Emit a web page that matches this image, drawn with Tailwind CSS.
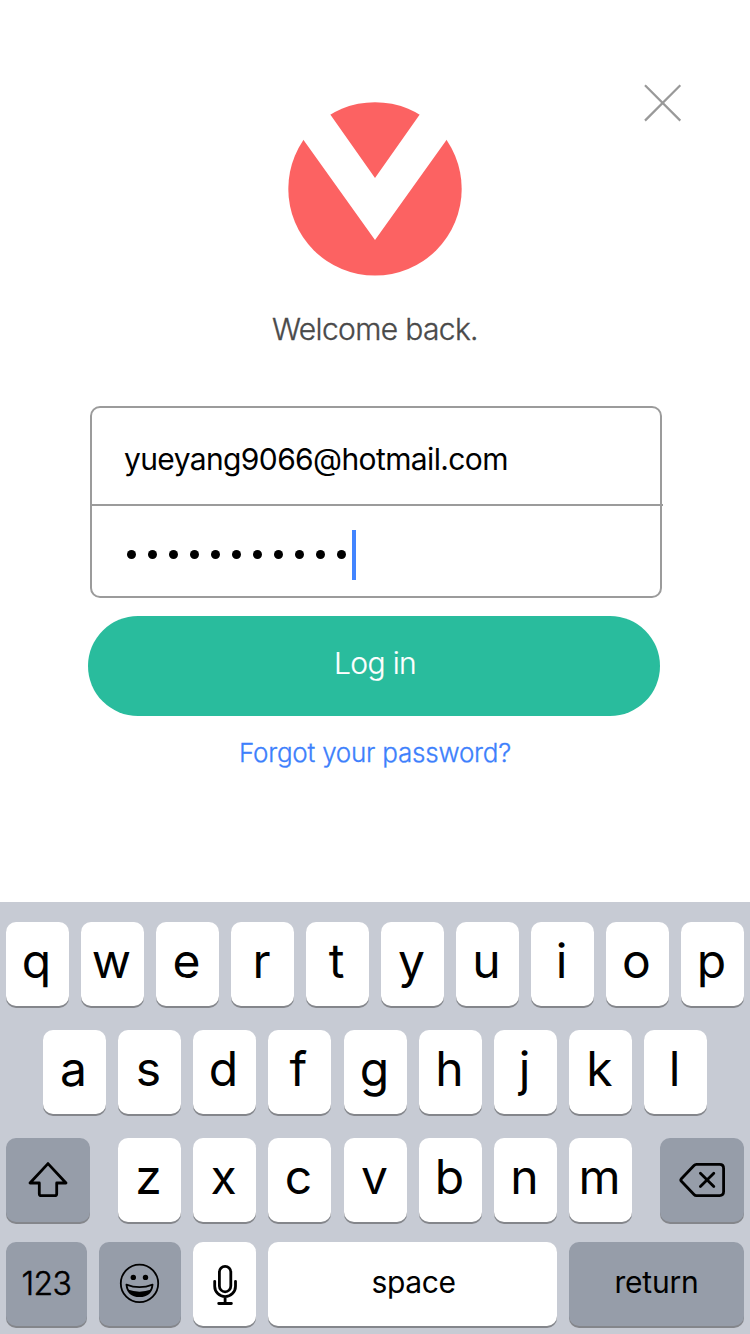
<!DOCTYPE html>
<html lang="en">
<head>
<meta charset="utf-8">
<title>Log in</title>
<script src="https://cdn.jsdelivr.net/npm/@tailwindcss/browser@4"></script>
</head>
<body class="w-[750px] h-[1334px] overflow-hidden bg-white flex flex-col font-['Inter','Liberation_Sans',sans-serif] text-black">
<main class="h-[902px] flex flex-col">
  <header class="grid grid-cols-[1fr_174px_1fr] pt-[84px] h-[276px]">
    <span></span>
    <svg class="mt-[18px] w-[174px] h-[174px]" viewBox="288 102 174 174"><circle cx="375" cy="188.9" r="86.7" fill="#fc6262"/><path d="M267.8 90 375 240 482.2 90H437L375 178 313 90Z" fill="#fff"/></svg>
    <svg class="ml-[182px] w-[38px] h-[38px]" viewBox="0 0 38 38" fill="none" stroke="#999" stroke-width="2.2"><path d="M1 1.3 36.3 36.6M36.3 1.3 1 36.6"/></svg>
  </header>
  <h1 class="mt-[33px] h-[40px] leading-[40px] text-center text-[30px] font-light text-[#4a4a4a] [-webkit-text-stroke:0.35px_#4a4a4a]"><span class="tracking-[-0.65px]">Welcome back.</span></h1>
  <form class="mt-[57px] ml-[90px] w-[572px] h-[192px] border-2 border-[#9b9b9b] rounded-[10px] flex flex-col">
    <div class="h-[98px] w-[571px] border-b-2 border-[#9b9b9b] pl-[32px] pt-[6px] flex items-center text-[30px] font-normal"><span class="tracking-[-0.62px]">yueyang9066@hotmail.com</span></div>
    <div class="flex-1 pl-[34.5px] pt-[7px] flex items-center gap-[12px]">
      <i class="size-[9px] rounded-full bg-black"></i><i class="size-[9px] rounded-full bg-black"></i><i class="size-[9px] rounded-full bg-black"></i><i class="size-[9px] rounded-full bg-black"></i><i class="size-[9px] rounded-full bg-black"></i><i class="size-[9px] rounded-full bg-black"></i><i class="size-[9px] rounded-full bg-black"></i><i class="size-[9px] rounded-full bg-black"></i><i class="size-[9px] rounded-full bg-black"></i><i class="size-[9px] rounded-full bg-black"></i><i class="size-[9px] rounded-full bg-black"></i>
      <i class="w-[4px] h-[50px] -ml-[6px] bg-[#4285ff]"></i>
    </div>
  </form>
  <button class="mt-[18px] ml-[88px] w-[572px] h-[100px] rounded-full bg-[#29bc9d] text-white text-[30px] font-light flex items-center justify-center pb-[5px] pl-[2px] [-webkit-text-stroke:0.2px_#fff]"><span class="tracking-[-0.65px]">Log in</span></button>
  <a class="mt-[17px] h-[40px] leading-[40px] text-center text-[26px] font-light text-[#3d80fc] [-webkit-text-stroke:0.3px_#3d80fc]"><span class="tracking-[-0.23px]">Forgot your password?</span></a>
</main>
<section class="h-[432px] bg-[#c7cbd4] px-[6px] pt-[20px] flex flex-col text-[48px] leading-[60px] [&_b]:font-normal [&_b]:w-[63px] [&_b]:h-[84px] [&_b]:rounded-[10px] [&_b]:bg-white [&_b]:shadow-[0_2px_0_#84868b] [&_b]:flex [&_b]:items-center [&_b]:justify-center [&_b]:pb-[6px] [&_b]:pr-[2px]">
  <div class="flex gap-[12px]"><b>q</b><b>w</b><b>e</b><b>r</b><b>t</b><b>y</b><b>u</b><b>i</b><b>o</b><b>p</b></div>
  <div class="mt-[24px] flex gap-[12px] pl-[37px]"><b>a</b><b>s</b><b>d</b><b>f</b><b class="ml-px">g</b><b>h</b><b>j</b><b>k</b><b>l</b></div>
  <div class="mt-[24px] flex gap-[12px]">
    <div class="w-[84px] h-[84px] mr-[16px] rounded-[10px] bg-[#969da9] shadow-[0_2px_0_#84868b]"><svg class="size-[84px]" viewBox="0 0 84 84" fill="none" stroke="#000" stroke-width="2.8" stroke-linejoin="round"><path d="M42 25.6 24 45H33.3V55.7Q33.3 57.7 35.3 57.7H48.7Q50.7 57.7 50.7 55.7V45H60Z"/></svg></div>
    <b>z</b><b>x</b><b>c</b><b class="ml-px">v</b><b>b</b><b>n</b><b>m</b>
    <div class="w-[84px] h-[84px] ml-[16px] rounded-[10px] bg-[#969da9] shadow-[0_2px_0_#84868b]"><svg class="size-[84px]" viewBox="0 0 84 84" fill="none" stroke="#000" stroke-width="2.8" stroke-linejoin="round" stroke-linecap="round"><path d="M36.5 26.4H59.6Q63.6 26.4 63.6 30.4V53.6Q63.6 57.6 59.6 57.6H36.5Q35 57.6 34 56.5L21.4 43.3Q20.2 42 21.4 40.7L34 27.5Q35 26.4 36.5 26.4ZM40.4 35.2 53.8 48.6M53.8 35.2 40.4 48.6"/></svg></div>
  </div>
  <div class="mt-[20px] flex gap-[12px] text-[30px] leading-[40px]">
    <div class="w-[81px] h-[84px] rounded-[10px] bg-[#969da9] shadow-[0_2px_0_#84868b] flex items-center justify-center text-[32px] font-light [-webkit-text-stroke:0.5px_#000]"><span class="tracking-[-0.6px]">123</span></div>
    <div class="w-[82px] h-[84px] rounded-[10px] bg-[#969da9] shadow-[0_2px_0_#84868b]"><svg class="w-[82px] h-[84px]" viewBox="0 0 82 84"><circle cx="40.5" cy="41.4" r="18.7" fill="none" stroke="#000" stroke-width="1.8"/><circle cx="34.3" cy="35.4" r="2.7"/><circle cx="46.5" cy="35.4" r="2.7"/><path d="M27.4 42.6Q40.5 47.8 53.6 42.6Q52.2 54.2 40.5 54.2T27.4 42.6Z" fill="none" stroke="#000" stroke-width="1.7" stroke-linejoin="round"/><path d="M28.6 47.6Q40.5 51.8 52.4 47.6Q49.4 54.2 40.5 54.2T28.6 47.6Z"/></svg></div>
    <div class="w-[63px] h-[84px] rounded-[10px] bg-white shadow-[0_2px_0_#84868b]"><svg class="w-[63px] h-[84px]" viewBox="0 0 63 84" fill="none" stroke="#000" stroke-width="2.8" stroke-linecap="round"><rect x="26.4" y="24.4" width="11.4" height="25.4" rx="5.7"/><path d="M21.7 39.3V44.2A10.4 10.4 0 0 0 42.5 44.2V39.3M32.1 55V61.4M25.7 61.5H38.4"/></svg></div>
    <div class="w-[289px] h-[84px] rounded-[10px] bg-white shadow-[0_2px_0_#84868b] flex items-center justify-center pb-[4px] pl-[2px]"><span class="tracking-[-0.4px]">space</span></div>
    <div class="w-[175px] h-[84px] rounded-[10px] bg-[#969da9] shadow-[0_2px_0_#84868b] flex items-center justify-center pb-[4px]"><span class="tracking-[-0.2px]">return</span></div>
  </div>
</section>
</body>
</html>
